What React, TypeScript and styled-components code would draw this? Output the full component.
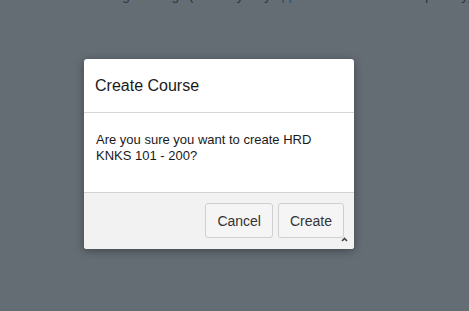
import React from "react";
import styled, { createGlobalStyle } from "styled-components";

const GlobalStyle = createGlobalStyle`
  html, body {
    margin: 0;
    padding: 0;
  }
  body {
    font-family: "Liberation Sans", Arial, sans-serif;
  }
`;

const Page = styled.div`
  min-height: 100vh;
  background: #646c74;
  overflow: hidden;
  display: flex;
  flex-direction: column;
  align-items: flex-start;
`;

// page content behind the backdrop, mostly scrolled off the top
const BehindText = styled.p`
  margin: -12px 0 0 90px;
  font-size: 13px;
  line-height: 15px;
  color: #2c3238;
  white-space: nowrap;

  a {
    color: #1f4d6e;
    text-decoration: none;
  }
`;

const Dialog = styled.div`
  position: relative;
  margin: 56px 0 0 84px;
  width: 270px;
  background: #fff;
  border-radius: 3px;
  box-shadow: 0 2px 8px rgba(0, 0, 0, 0.35);
  overflow: hidden;
`;

const Header = styled.div`
  height: 53px;
  display: flex;
  align-items: center;
  padding: 0 11px;
  border-bottom: 1px solid #d6d6d6;
`;

const Title = styled.h3`
  margin: 0;
  font-size: 16px;
  font-weight: 400;
  color: #1a1a1a;
`;

const Body = styled.div`
  padding: 19px 30px 28px 12px;
  font-size: 13px;
  line-height: 16px;
  color: #1a1a1a;
`;

const Footer = styled.div`
  display: flex;
  justify-content: flex-end;
  gap: 5px;
  padding: 10px 10px 11px;
  background: #f2f2f2;
  border-top: 1px solid #d2d2d2;
`;

const Button = styled.button`
  height: 35px;
  padding: 0 11px;
  font-family: "Liberation Sans", Arial, sans-serif;
  font-size: 14px;
  color: #333;
  background: #f5f5f5;
  border: 1px solid #cfcfcf;
  border-radius: 3px;
  cursor: pointer;
`;

const Grip = styled.svg`
  position: absolute;
  right: 6px;
  bottom: 7px;
`;

export default function App() {
  return (
    <>
      <GlobalStyle />
      <Page>
        <BehindText>
          Manage settings (currently only <a>approved</a> courses are temporarily)
        </BehindText>
        <Dialog>
          <Header>
            <Title>Create Course</Title>
          </Header>
          <Body>Are you sure you want to create HRD KNKS 101 - 200?</Body>
          <Footer>
            <Button>Cancel</Button>
            <Button>Create</Button>
          </Footer>
          <Grip width="7" height="5" viewBox="0 0 7 5">
            <polyline points="1,4 3.5,1.5 6,4" fill="none" stroke="#444" strokeWidth="1.6" />
          </Grip>
        </Dialog>
      </Page>
    </>
  );
}
